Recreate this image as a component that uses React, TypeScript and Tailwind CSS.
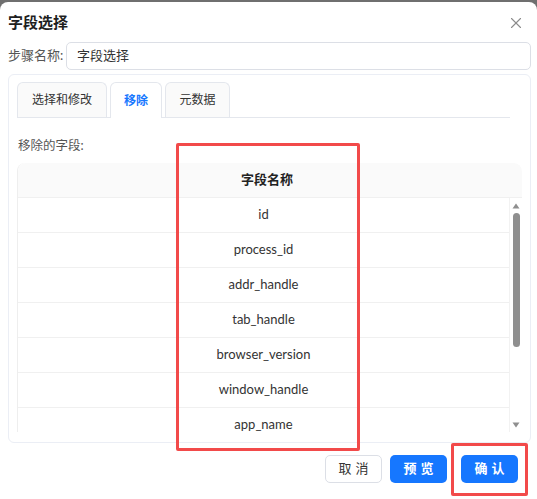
import { X } from "lucide-react"

const FIELDS = ["id", "process_id", "addr_handle", "tab_handle", "browser_version", "window_handle", "app_name"]

const TABS = [
  { key: "edit", label: "选择和修改", w: "w-[90px]" },
  { key: "remove", label: "移除", w: "w-[52px]" },
  { key: "meta", label: "元数据", w: "w-[65px]" },
]

export default function App() {
  const active = "remove"
  return (
    <div
      className="relative w-[537px] h-[499px] overflow-hidden bg-[#6f6f6f] text-[#303133]"
      style={{ fontFamily: 'Lato, "Noto Sans CJK SC", sans-serif' }}
    >
      <div className="mt-[2px] h-[497px] bg-white rounded-t-lg flex flex-col">
        {/* header */}
        <div className="flex items-center justify-between h-[37px] pl-2 pr-3 pt-1">
          <h1 className="text-[15px] font-bold text-[#1f1f1f]">字段选择</h1>
          <X className="w-[18px] h-[18px] text-[#8c8c8c]" strokeWidth={1.5} />
        </div>

        <div className="flex items-center h-[28px] mt-[3px] pl-2 pr-[6px]">
          <span className="text-[13px] text-[#555] w-[58px] shrink-0">步骤名称:</span>
          <div className="flex-1 h-[28px] border border-[#dcdfe6] rounded-[5px] flex items-center px-[10px] text-[13px] text-[#333]">
            字段选择
          </div>
        </div>

        {/* tab card */}
        <div className="ml-2 mr-[6px] mt-[4px] h-[369px] border border-[#ebeef5] rounded-md pt-[7px] px-2 pb-[10px] flex flex-col">
          <div className="flex gap-[3px] border-b border-[#e4e7ed] mr-[12px] h-[36px] shrink-0">
            {TABS.map((t) => (
              <div
                key={t.key}
                className={
                  t.key === active
                    ? `${t.w} h-[36px] flex items-center justify-center rounded-t-md border border-b-0 border-[#e4e7ed] bg-white text-[12px] font-bold text-[#1677ff] -mb-px`
                    : `${t.w} h-[35px] flex items-center justify-center rounded-t-md border border-b-0 border-[#e4e7ed] bg-[#fafafa] text-[12px] text-[#333]`
                }
              >
                {t.label}
              </div>
            ))}
          </div>

          <div className="text-[12.5px] text-[#555] mt-[19px] pl-px">移除的字段:</div>

          {/* table */}
          <div className="mt-[7px] border-l border-[#eee] rounded-t-lg overflow-hidden flex-1 flex flex-col">
            <div className="h-[35px] shrink-0 bg-[#fafafa] border-b border-[#f0f0f0] rounded-t-lg flex items-center justify-center pr-[6px] text-[13px] font-bold text-[#222]">
              字段名称
            </div>
            <div className="flex flex-1 overflow-hidden">
              <div className="flex-1">
                {FIELDS.map((f) => (
                  <div key={f} className="h-[35px] border-b border-[#f0f0f0] flex items-center justify-center text-[13px] text-[#333]">
                    {f}
                  </div>
                ))}
              </div>
              {/* scrollbar */}
              <div className="w-[13px] bg-white border-l border-[#f2f2f2] flex flex-col items-center pt-[5px]">
                <svg width="8" height="6" viewBox="0 0 8 6" className="shrink-0">
                  <path d="M4 0.5 L7.5 5.5 L0.5 5.5 Z" fill="#8f8f8f" />
                </svg>
                <div className="mt-[4px] w-[7px] h-[134px] rounded-full bg-[#8f8f8f]" />
                <div className="flex-1" />
                <svg width="8" height="6" viewBox="0 0 8 6" className="shrink-0 mb-[4px]">
                  <path d="M0.5 0.5 L7.5 0.5 L4 5.5 Z" fill="#8f8f8f" />
                </svg>
              </div>
            </div>
          </div>
        </div>

        {/* footer */}
        <div className="flex justify-end gap-2 mt-[12px] pr-[19px]">
          <button className="w-[57px] h-[28px] rounded-[5px] border border-[#dcdfe6] bg-white text-[13px] tracking-[4px] pl-[4px] text-[#333]">
            取消
          </button>
          <button className="w-[57px] h-[28px] rounded-[5px] bg-[#1677ff] text-white text-[13px] font-bold tracking-[4px] pl-[4px]">
            预览
          </button>
          <button className="ml-[6px] w-[57px] h-[28px] rounded-[5px] bg-[#1677ff] text-white text-[13px] font-bold tracking-[4px] pl-[4px]">
            确认
          </button>
        </div>
      </div>

      {/* highlight frames */}
      <div className="absolute left-[176px] top-[143px] w-[184px] h-[308px] border-[3px] border-[#f24a4a] rounded-[2px] pointer-events-none" />
      <div className="absolute left-[451px] top-[443px] w-[77px] h-[53px] border-[3px] border-[#f24a4a] rounded-[2px] pointer-events-none" />
    </div>
  )
}
